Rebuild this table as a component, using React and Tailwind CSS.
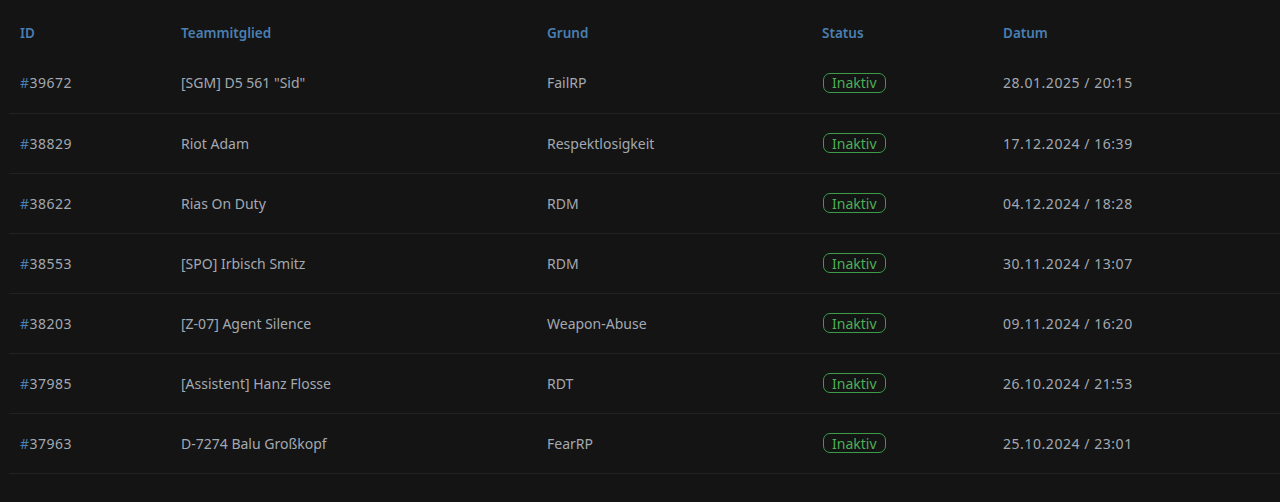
export default function App() {
  const rows = [
    ["39672", '[SGM] D5 561 "Sid"', "FailRP", "28.01.2025 / 20:15"],
    ["38829", "Riot Adam", "Respektlosigkeit", "17.12.2024 / 16:39"],
    ["38622", "Rias On Duty", "RDM", "04.12.2024 / 18:28"],
    ["38553", "[SPO] Irbisch Smitz", "RDM", "30.11.2024 / 13:07"],
    ["38203", "[Z-07] Agent Silence", "Weapon-Abuse", "09.11.2024 / 16:20"],
    ["37985", "[Assistent] Hanz Flosse", "RDT", "26.10.2024 / 21:53"],
    ["37963", "D-7274 Balu Großkopf", "FearRP", "25.10.2024 / 23:01"],
  ];
  return (
    <div className="min-h-[502px] w-full bg-[#141414] pl-[9px] pt-[13px]" style={{ fontFamily: '"Noto Sans", "Open Sans", sans-serif' }}>
      <table className="w-full border-collapse text-left text-[14px] text-[#a3a9b1]">
        <colgroup>
          <col className="w-[161px]" />
          <col className="w-[366px]" />
          <col className="w-[275px]" />
          <col className="w-[181px]" />
          <col />
        </colgroup>
        <thead>
          <tr className="h-[40px] text-[13.5px] text-[#4a7fb0]">
            <th className="pl-[11px] font-semibold">ID</th>
            <th className="pl-[11px] font-semibold">Teammitglied</th>
            <th className="pl-[11px] font-semibold">Grund</th>
            <th className="pl-[11px] font-semibold">Status</th>
            <th className="pl-[11px] font-semibold">Datum</th>
          </tr>
        </thead>
        <tbody>
          {rows.map((r) => (
            <tr key={r[0]} className="h-[60px] border-b border-[#222222]">
              <td className="pl-[11px] tracking-[0.5px]">
                <span className="text-[#4a7fb0]">#</span>
                <span className="text-[#a3a9b1]">{r[0]}</span>
              </td>
              <td className="pl-[11px]">{r[1]}</td>
              <td className="pl-[11px]">{r[2]}</td>
              <td className="pl-[12px]">
                <span className="inline-flex h-[20px] items-center rounded-[7px] border border-[#3d9a48] px-[8px] text-[#4caf57]">
                  Inaktiv
                </span>
              </td>
              <td className="pl-[11px] tracking-[0.55px]">{r[3]}</td>
            </tr>
          ))}
        </tbody>
      </table>
    </div>
  );
}
